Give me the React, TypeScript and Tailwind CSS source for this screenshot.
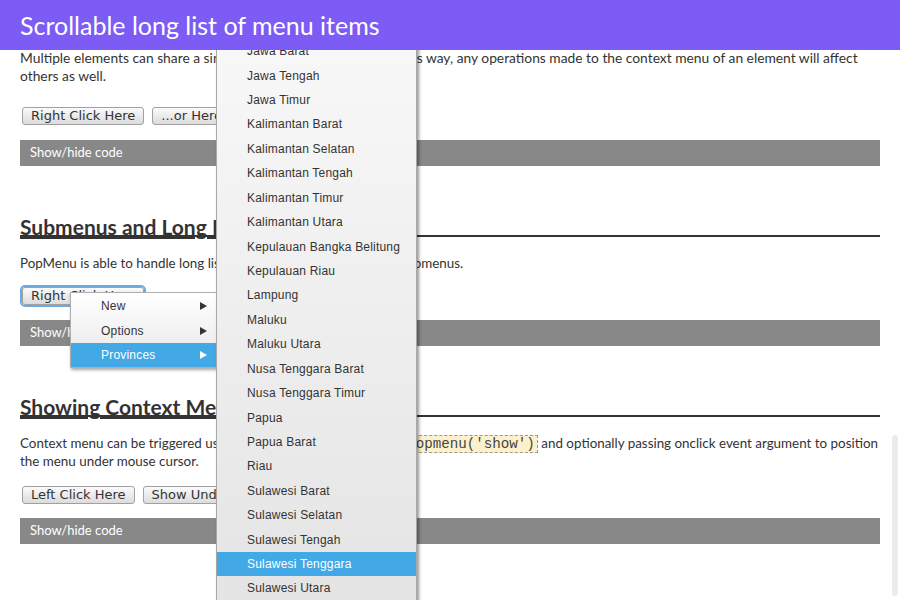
import React from 'react';

const provinces = [
  'Jawa Barat',
  'Jawa Tengah',
  'Jawa Timur',
  'Kalimantan Barat',
  'Kalimantan Selatan',
  'Kalimantan Tengah',
  'Kalimantan Timur',
  'Kalimantan Utara',
  'Kepulauan Bangka Belitung',
  'Kepulauan Riau',
  'Lampung',
  'Maluku',
  'Maluku Utara',
  'Nusa Tenggara Barat',
  'Nusa Tenggara Timur',
  'Papua',
  'Papua Barat',
  'Riau',
  'Sulawesi Barat',
  'Sulawesi Selatan',
  'Sulawesi Tengah',
  'Sulawesi Tenggara',
  'Sulawesi Utara',
  'Sumatera Barat',
];

function Btn(props: { children: React.ReactNode; focused?: boolean }) {
  return (
    <button
      type="button"
      className={`h-[18px] rounded-[3px] border border-[#a0a0a0] bg-gradient-to-b from-[#fbfbfb] to-[#dcdcdc] px-[8px] font-['DejaVu_Sans',sans-serif] text-[13px] leading-[16px] text-[#333] ${
        props.focused ? 'outline-2 outline-offset-0 outline-[#6aaae6]' : ''
      }`}
    >
      {props.children}
    </button>
  );
}

function CodeBar() {
  return (
    <div className="flex h-[26px] items-center bg-[#888] pl-[10px] text-[13px] text-white">
      Show/hide code
    </div>
  );
}

function Heading(props: { children: React.ReactNode }) {
  return (
    <h2 className="border-b-2 border-[#333] text-[21px] leading-[16px] font-bold text-[#333]">
      <span className="underline decoration-2 underline-offset-[2px]">{props.children}</span>
    </h2>
  );
}

function Arrow({ light }: { light?: boolean }) {
  return (
    <svg width="7" height="8" viewBox="0 0 7 8" className="ml-auto">
      <path d="M0 0 L7 4 L0 8 Z" fill={light ? '#fff' : '#333'} />
    </svg>
  );
}

export default function App() {
  return (
    <div className="relative h-[600px] w-[900px] overflow-hidden bg-white font-['Lato',sans-serif] text-[#333]">
      {/* Top bar */}
      <header className="absolute inset-x-0 top-0 z-30 flex h-[50px] items-center bg-[#7c5cf4] pl-[20px]">
        <h1 className="text-[25px] leading-none text-white">Scrollable long list of menu items</h1>
      </header>

      {/* Scrolled page content */}
      <main className="flex flex-col px-[20px] pt-[49px]">
        <p className="text-[13.8px] leading-[18px]">
          Multiple elements can share a single context menu instance. In this way, any operations
          made to the context menu of an element will affect others as well.
        </p>
        <div className="mt-[22px] flex gap-[8px] pl-[2px]">
          <Btn>Right Click Here</Btn>
          <Btn>...or Here</Btn>
        </div>
        <div className="mt-[15px]">
          <CodeBar />
        </div>

        <div className="mt-[53px]">
          <Heading>Submenus and Long Menus</Heading>
        </div>
        <p className="mt-[17px] text-[13.4px] leading-[18px]">
          PopMenu is able to handle long lists of menu entries, and nested submenus.
        </p>
        <div className="mt-[15px] flex gap-[8px] pl-[2px]">
          <Btn focused>Right Click Here</Btn>
        </div>
        <div className="mt-[15px]">
          <CodeBar />
        </div>

        <div className="mt-[53px]">
          <Heading>Showing Context Menu Programmatically</Heading>
        </div>
        <p className="mt-[17px] text-[13.4px] leading-[18px]">
          Context menu can be triggered using JavaScript by simply calling{' '}
          <code className="ml-[4px] border border-dashed border-[#999] bg-[#fdf1cc] px-[2px] font-['Liberation_Mono',monospace] text-[14.2px] leading-none text-[#444]">
            popmenu('show')
          </code>{' '}
          and optionally passing onclick event argument to position the menu under mouse cursor.
        </p>
        <div className="mt-[16px] flex gap-[8px] pl-[2px]">
          <Btn>Left Click Here</Btn>
          <Btn>Show Under Cursor</Btn>
        </div>
        <div className="mt-[14px]">
          <CodeBar />
        </div>
      </main>

      {/* Page scrollbar thumb */}
      <div className="absolute right-[2px] top-[435px] h-[161px] w-[6px] rounded-full bg-[#ececec]" />

      {/* Context menu */}
      <div className="absolute left-[70px] top-[292px] z-10 w-[147px] border border-[#b0b0b0] bg-gradient-to-b from-white to-[#e6e6e6] pt-[1px] shadow-[1px_2px_3px_rgba(0,0,0,0.35)] font-['Liberation_Sans',sans-serif] text-[12px] tracking-[0.2px]">
        {['New', 'Options', 'Provinces'].map((label) => {
          const active = label === 'Provinces';
          return (
            <div
              key={label}
              className={`flex h-[24.4px] items-center pl-[30px] pr-[9px] ${
                active ? 'bg-[#42a8e6] text-white' : 'text-[#333]'
              }`}
            >
              {label}
              <Arrow light={active} />
            </div>
          );
        })}
      </div>

      {/* Provinces submenu */}
      <div className="absolute left-[216px] top-[39px] z-20 h-[600px] w-[201px] border-x border-[#a8a8a8] bg-gradient-to-b from-[#f8f8f8] to-[#e3e3e3] shadow-[2px_1px_3px_rgba(0,0,0,0.4)] font-['Liberation_Sans',sans-serif] text-[12px] tracking-[0.2px]">
        {provinces.map((p) => {
          const active = p === 'Sulawesi Tenggara';
          return (
            <div
              key={p}
              className={`flex h-[24.43px] items-center pl-[30px] ${
                active ? 'bg-[#42a8e6] text-white' : 'text-[#333]'
              }`}
            >
              {p}
            </div>
          );
        })}
      </div>
    </div>
  );
}
